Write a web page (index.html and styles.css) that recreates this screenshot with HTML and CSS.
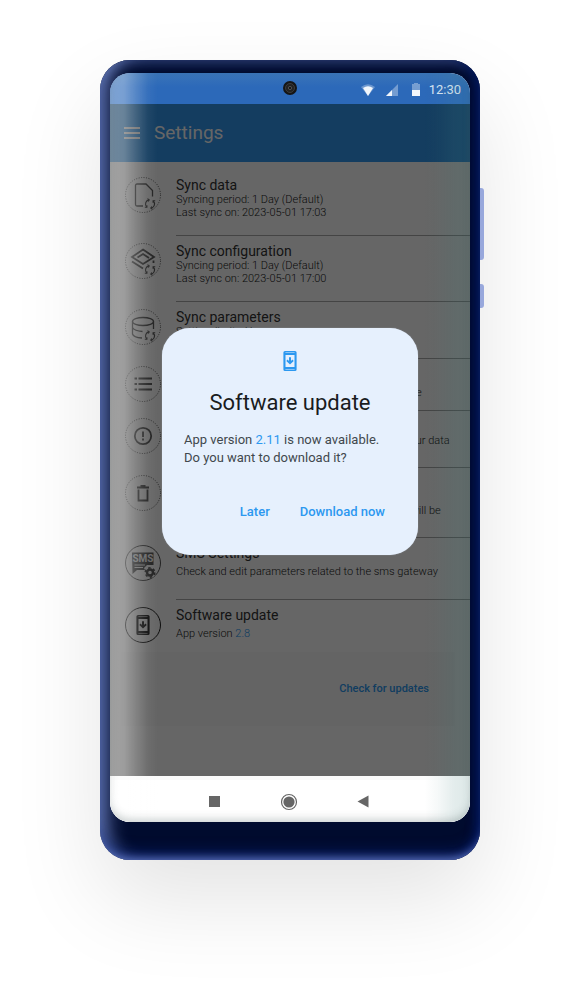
FILE: index.html
```html
<!DOCTYPE html>
<html lang="en">
<head>
<meta charset="utf-8">
<meta name="viewport" content="width=device-width, initial-scale=1">
<title>Settings</title>
<link rel="stylesheet" href="styles.css">
</head>
<body>
<svg class="defs" aria-hidden="true">
  <symbol id="sync" viewBox="0 0 12 12">
    <g fill="none" stroke="currentColor" stroke-width="1.1">
      <path d="M2.700 9A4.300 4.300 0 0 1 4.600 1.900M9.300 3A4.300 4.300 0 0 1 7.400 10.100"/>
      <path d="M3.500 .6 5.200 1.800 4.200 3.500M8.500 11.400 6.800 10.200 7.800 8.500"/>
      <path d="M.8 9.200H2.900V7.200M11.200 2.800H9.100V4.800"/>
    </g>
  </symbol>
  <symbol id="update" viewBox="0 0 14 20">
    <path fill="currentColor" fill-rule="evenodd" d="M2 0H12A1.600 1.600 0 0 1 13.600 1.600V18.400A1.600 1.600 0 0 1 12 20H2A1.600 1.600 0 0 1 .4 18.400V1.600A1.600 1.600 0 0 1 2 0ZM2.400 1.500V2.100H11.600V1.500ZM2.500 4V16H11.500V4ZM2.400 17.900V18.500H11.600V17.900Z"/>
    <path fill="currentColor" d="M6 6.300H8V10L9.400 8.600 10.700 9.900 7 13.600 3.300 9.900 4.600 8.600 6 10Z"/>
  </symbol>
</svg>
<main class="stage">
  <div class="phone">
    <span class="side-key side-key-volume"></span>
    <span class="side-key side-key-power"></span>
    <div class="screen">
      <div class="status">
        <svg class="camera" viewBox="0 0 14 14"><circle cx="7" cy="7" r="7" fill="#151515"/><circle cx="7" cy="7" r="4.500" fill="#222" stroke="#3c3c3c"/><circle cx="7" cy="7" r="1.600" fill="#111" stroke="#666" stroke-width=".7"/></svg>
        <svg width="14" height="14" viewBox="0 0 14 14"><path d="M0 4Q7-1.500 14 4L7 13Z" fill="#fff" opacity=".3"/><path d="M2 5Q7 1.500 12 5L7 13Z" fill="#f2f6fb"/></svg>
        <svg class="signal" width="12" height="12" viewBox="0 0 12 12"><path d="M12 0V12H0Z" fill="#fff" opacity=".35"/><path d="M6 6V12H0Z" fill="#f2f6fb"/></svg>
        <svg class="battery" width="8" height="14" viewBox="0 0 8 14"><path d="M2 1V0H6V1H8V7H0V1Z" fill="#fff" opacity=".35"/><path d="M0 7H8V13H0Z" fill="#f2f6fb"/></svg>
        <span class="time">12:30</span>
      </div>
      <div class="app">
        <header class="app-bar">
          <button class="menu" aria-label="Menu"><svg width="16" height="12" viewBox="0 0 16 12"><path d="M0 1H16M0 6H16M0 11H16" stroke="currentColor" stroke-width="1.800"/></svg></button>
          <h1>Settings</h1>
        </header>
        <ul class="list">
          <li class="row row-tall">
            <svg class="icon" viewBox="0 0 36 36"><circle class="ring" cx="18" cy="18" r="17.500"/><path class="line" d="M18 29H12Q10.500 29 10.500 27.500V8.500Q10.500 7 12 7H21L27.500 13.500V19.500"/><use href="#sync" x="19" y="21" width="12" height="12"/></svg>
            <div class="text"><h2>Sync data</h2><p>Syncing period: 1 Day (Default)<br>Last sync on: 2023-05-01 17:03</p></div>
          </li>
          <li class="row row-tall">
            <svg class="icon" viewBox="0 0 36 36"><circle class="ring" cx="18" cy="18" r="17.500"/><path class="bold" d="M18 6.500 29 14 18 21 7 14ZM12.500 14.500 18 11 24 15M7 18.500 18 25.500"/><path class="bold" d="M28.500 17.500V20"/><use href="#sync" x="19" y="21" width="12" height="12"/></svg>
            <div class="text"><h2>Sync configuration</h2><p>Syncing period: 1 Day (Default)<br>Last sync on: 2023-05-01 17:00</p></div>
          </li>
          <li class="row row-medium">
            <svg class="icon" viewBox="0 0 36 36"><circle class="ring" cx="18" cy="18" r="17.500"/><g class="line"><ellipse cx="18" cy="12.500" rx="10.500" ry="4"/><path d="M7.500 12.500V25Q8.500 28.500 17 29M28.500 12.500V20M7.500 18.500Q9.500 22 17.500 22.500"/></g><use href="#sync" x="19" y="21" width="12" height="12"/></svg>
            <div class="text"><h2>Sync parameters</h2><p>Setting: limited by</p></div>
          </li>
          <li class="row row-short">
            <svg class="icon" viewBox="0 0 36 36"><circle class="ring" cx="18" cy="18" r="17.500"/><path class="bold" d="M9.500 12.500H12M13.500 12.500H27M9.500 18H12M13.500 18H27M9.500 23.500H12M13.500 23.500H27"/></svg>
            <div class="text spaced"><h2>Reserved values</h2><p>Manage the reserved values for every attribute type</p></div>
          </li>
          <li class="row row-medium">
            <svg class="icon" viewBox="0 0 36 36"><circle class="ring" cx="18" cy="18" r="17.500"/><circle class="bold" cx="18" cy="18" r="8.200"/><path class="bold" d="M18 13.500V19M18 20.500V22.500"/></svg>
            <div class="text"><h2>Open errors log</h2><p>Open the list of sync errors which are related to your data</p></div>
          </li>
          <li class="row row-delete">
            <svg class="icon" viewBox="0 0 36 36"><circle class="ring" cx="18" cy="18" r="17.500"/><path class="bold" d="M12 12.500H24M15.500 11H20.500M13.500 14.500V25.500H22.500V14.500"/></svg>
            <div class="text"><h2>Delete local data</h2><p>Remove local data from this device.<br>All of the changes that have not yet been synced will be</p></div>
          </li>
          <li class="row row-sms">
            <svg class="icon" viewBox="0 0 36 36"><circle class="ring solid" cx="18" cy="18" r="17.500"/><path d="M7 7.500H28.500V20H22L19 23 20 25H12L7.500 29Z" fill="currentColor"/><text x="18" y="17" class="sms">SMS</text><path d="M9.500 20H20M9.500 22.500H18" stroke="#fff"/><circle cx="25" cy="27.500" r="5.500" fill="#fff"/><circle cx="25" cy="27.500" r="3" fill="none" stroke="currentColor" stroke-width="2.400"/><circle cx="25" cy="27.500" r="4.700" fill="none" stroke="currentColor" stroke-width="1.600" stroke-dasharray="2.460 2.460"/></svg>
            <div class="text spaced"><h2>SMS Settings</h2><p>Check and edit parameters related to the sms gateway</p></div>
          </li>
          <li class="row row-last">
            <svg class="icon dark" viewBox="0 0 36 36"><circle class="ring solid" cx="18" cy="18" r="17.500"/><use href="#update" x="11" y="8" width="14" height="20"/></svg>
            <div class="text spaced"><h2>Software update</h2><p>App version <span class="accent">2.8</span></p></div>
          </li>
        </ul>
        <div class="check"><button>Check for updates</button></div>
        <div class="scrim">
          <section class="dialog" role="dialog" aria-labelledby="dialog-title">
            <svg class="dialog-icon" viewBox="0 0 14 20"><use href="#update"/></svg>
            <h2 id="dialog-title">Software update</h2>
            <p>App version <span class="accent">2.11</span> is now available.<br>Do you want to download it?</p>
            <div class="actions"><button>Later</button><button>Download now</button></div>
          </section>
        </div>
      </div>
      <nav class="nav">
        <button aria-label="Recent apps"><svg width="11" height="11" viewBox="0 0 11 11"><path d="M0 0H11V11H0Z" fill="#666"/></svg></button>
        <button aria-label="Home"><svg width="18" height="18" viewBox="0 0 18 18"><circle cx="9" cy="9" r="7.500" fill="none" stroke="#666" stroke-width="1.200"/><circle cx="9" cy="9" r="5.600" fill="#666"/></svg></button>
        <button aria-label="Back"><svg width="12" height="13" viewBox="0 0 12 13"><path d="M11.500 .5V12.500L.5 6.500Z" fill="#666"/></svg></button>
      </nav>
      <div class="glare"></div>
    </div>
  </div>
</main>
</body>
</html>
```
FILE: styles.css
```css
* { box-sizing: border-box; }
body { margin: 0; background: #fff; font-family: Roboto, "Liberation Sans", sans-serif; }
h1, h2, p, ul { margin: 0; padding: 0; }
button { border: 0; padding: 0; background: none; font-family: inherit; cursor: pointer; }
svg { display: block; flex: none; }
.defs { position: absolute; width: 0; height: 0; }

.stage { display: flex; justify-content: center; padding: 60px 20px 140px 16px; overflow: hidden; }
.phone {
  position: relative;
  width: 100%;
  max-width: 380px;
  padding: 13px 10px 38px;
  border-radius: 30px;
  background: #000b2e;
  box-shadow:
    inset 0 -8px 8px -6px rgba(110, 132, 205, .8),
    inset 0 -12px 14px -4px rgba(8, 32, 110, .7),
    inset 16px 0 20px -10px rgba(125, 148, 212, .95),
    inset -10px 0 8px -4px #001450,
    inset 0 10px 8px -4px #14234f,
    0 40px 90px rgba(0, 0, 0, .11);
}
.side-key {
  position: absolute;
  left: 100%;
  width: 4px;
  border-radius: 0 3px 3px 0;
  background: #98a8dc;
}
.side-key-volume { top: 128px; height: 72px; }
.side-key-power { top: 224px; height: 24px; }

.screen { position: relative; overflow: hidden; border-radius: 20px; background: #fff; }
.glare {
  position: absolute;
  inset: 0;
  border-radius: inherit;
  pointer-events: none;
  background:
    linear-gradient(90deg, rgba(255, 255, 255, .4), rgba(255, 255, 255, .36) 14px, rgba(255, 255, 255, .2) 26px, rgba(255, 255, 255, .05) 38px, transparent 48px),
    linear-gradient(270deg, rgba(69, 130, 128, .18), rgba(69, 130, 128, .15) 16px, rgba(69, 130, 128, .04) 34px, transparent 46px);
  box-shadow: inset 0 -4px 10px -2px rgba(60, 80, 80, .3);
}

.status {
  position: relative;
  display: flex;
  align-items: center;
  justify-content: flex-end;
  height: 31px;
  padding: 2px 9px 0 0;
  background: linear-gradient(#3a74b8, #2c69b9 14px);
  color: #dce8f6;
}
.camera { position: absolute; top: 8px; left: 50%; width: 14px; margin-left: -7px; }
.signal { margin-left: 11px; }
.battery { margin-left: 14px; }
.time { margin-left: 9px; font-size: 13px; line-height: 16px; }

.app { position: relative; padding-bottom: 50px; background: #fff; }
.app-bar { display: flex; align-items: center; gap: 14px; height: 58px; padding-left: 14px; background: #3298f0; color: #fff; }
.menu { color: inherit; }
.app-bar h1 { font-size: 19px; line-height: 24px; font-weight: 400; }

.list { list-style: none; padding: 8px 0 0 15px; }
.row { display: flex; gap: 15px; }
.icon { width: 36px; height: 36px; margin-top: 7px; color: #555; }
.icon.dark { color: #222; }
.ring { fill: none; stroke: currentColor; stroke-dasharray: 1 1.500; }
.ring.solid { stroke-dasharray: none; }
.line { fill: none; stroke: currentColor; stroke-width: 1.300; }
.bold { fill: none; stroke: currentColor; stroke-width: 1.800; }
.sms { fill: #fff; font-size: 10px; font-weight: 700; text-anchor: middle; }
.text { flex: 1; padding-top: 7px; border-bottom: 1px solid #aaa; }
.text h2 { font-size: 14px; line-height: 16px; font-weight: 400; color: #333; }
.text p { font-size: 11px; line-height: 13px; font-weight: 300; color: #222; white-space: nowrap; }
.text.spaced p { margin-top: 4px; }
.row-tall { min-height: 66px; }
.row-medium { min-height: 57px; }
.row-short { min-height: 52px; }
.row-delete { min-height: 70px; }
.row-sms { min-height: 62px; }
.row-last { min-height: 52px; }
.row-last .text { border-bottom: 0; }
.accent { color: #2c98f0; }

.check { display: flex; align-items: center; justify-content: flex-end; height: 74px; margin: 0 15px 0 11px; padding-right: 26px; background: #fafafa; }
.check button { font-size: 11px; line-height: 16px; font-weight: 500; color: #2c98f0; }

.scrim { position: absolute; inset: 0; display: grid; place-items: center; padding-top: 3px; background: rgba(0, 0, 0, .6); }
.dialog {
  width: calc(100% - 104px);
  padding: 21px 22px 26px;
  border-radius: 28px;
  background: #e6f0fd;
  box-shadow: 0 0 1px 0 #b4bcc8;
}
.dialog-icon { width: 14px; height: 20px; margin: 2px auto; color: #2c98f0; }
.dialog h2 { margin-top: 16px; text-align: center; font-size: 22px; line-height: 32px; font-weight: 400; color: #191c1e; }
.dialog p { margin-top: 12px; font-size: 13px; line-height: 18px; color: #41484d; }
.actions { display: flex; justify-content: flex-end; gap: 30px; margin-top: 26px; padding-right: 11px; }
.actions button { height: 36px; font-size: 13px; font-weight: 500; color: #2c98f0; }

.nav { display: flex; align-items: center; justify-content: center; gap: 50px; height: 46px; padding: 1px 3px 0 0; border-top: 4px solid #fbfbfb; background: #fff; }
.nav button { display: grid; place-items: center; width: 24px; height: 24px; }
```
